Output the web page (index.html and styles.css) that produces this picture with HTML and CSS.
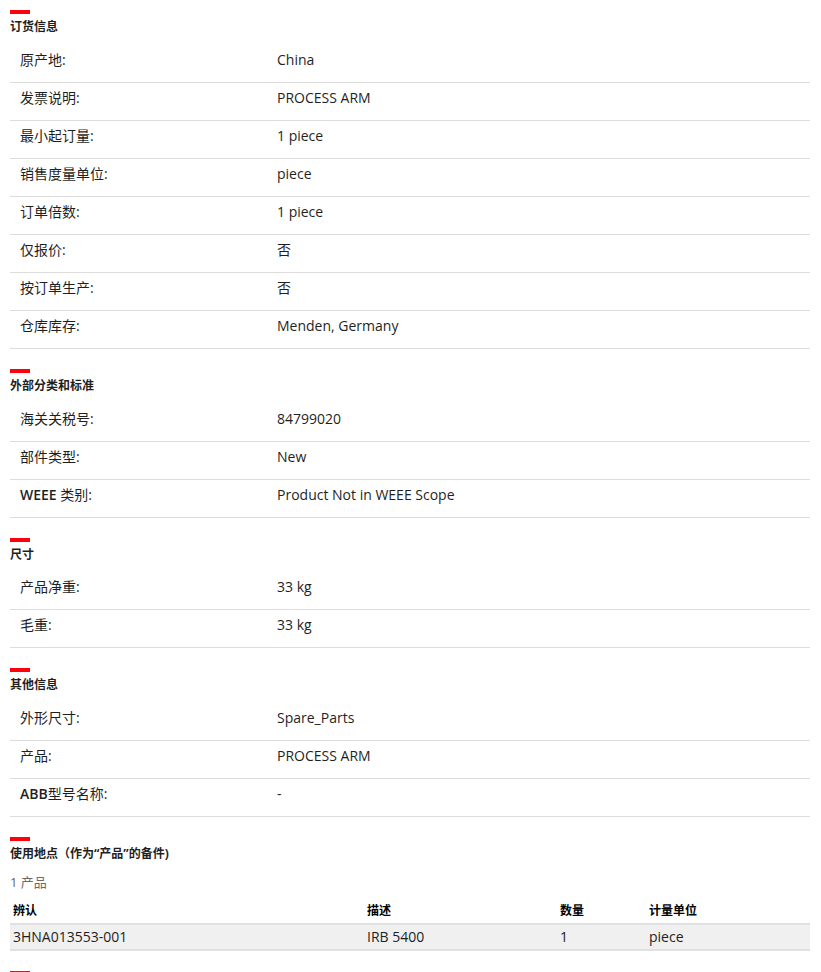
FILE: index.html
```html
<!DOCTYPE html>
<html lang="zh">
<head>
<meta charset="utf-8">
<title>产品详情</title>
<link rel="stylesheet" href="styles.css">
</head>
<body>
<div class="page">
  <section class="sec first">
    <div class="bar"></div>
    <h3 class="title">订货信息</h3>
    <div class="row"><div class="label">原产地:</div><div class="value">China</div></div>
    <div class="row"><div class="label">发票说明:</div><div class="value">PROCESS ARM</div></div>
    <div class="row"><div class="label">最小起订量:</div><div class="value">1 piece</div></div>
    <div class="row"><div class="label">销售度量单位:</div><div class="value">piece</div></div>
    <div class="row"><div class="label">订单倍数:</div><div class="value">1 piece</div></div>
    <div class="row"><div class="label">仅报价:</div><div class="value">否</div></div>
    <div class="row"><div class="label">按订单生产:</div><div class="value">否</div></div>
    <div class="row"><div class="label">仓库库存:</div><div class="value">Menden, Germany</div></div>
  </section>

  <section class="sec">
    <div class="bar"></div>
    <h3 class="title">外部分类和标准</h3>
    <div class="row"><div class="label">海关关税号:</div><div class="value">84799020</div></div>
    <div class="row"><div class="label">部件类型:</div><div class="value">New</div></div>
    <div class="row"><div class="label"><span class="lat">WEEE</span> 类别:</div><div class="value">Product Not in WEEE Scope</div></div>
  </section>

  <section class="sec tight">
    <div class="bar"></div>
    <h3 class="title">尺寸</h3>
    <div class="row"><div class="label">产品净重:</div><div class="value">33 kg</div></div>
    <div class="row"><div class="label">毛重:</div><div class="value">33 kg</div></div>
  </section>

  <section class="sec">
    <div class="bar"></div>
    <h3 class="title">其他信息</h3>
    <div class="row"><div class="label">外形尺寸:</div><div class="value">Spare_Parts</div></div>
    <div class="row"><div class="label">产品:</div><div class="value">PROCESS ARM</div></div>
    <div class="row"><div class="label"><span class="lat">ABB</span>型号名称:</div><div class="value">-</div></div>
  </section>

  <section class="sec">
    <div class="bar"></div>
    <h3 class="title">使用地点（作为“产品”的备件)</h3>
    <p class="count">1 产品</p>
    <table class="parts">
      <thead>
        <tr><th class="c1">辨认</th><th class="c2">描述</th><th class="c3">数量</th><th class="c4">计量单位</th></tr>
      </thead>
      <tbody>
        <tr><td>3HNA013553-001</td><td>IRB 5400</td><td>1</td><td>piece</td></tr>
      </tbody>
    </table>
  </section>

  <section class="sec">
    <div class="bar"></div>
  </section>
</div>
</body>
</html>
```

FILE: styles.css
```css
* { box-sizing: border-box; }

html, body {
  margin: 0;
  padding: 0;
  background: #ffffff;
}

body {
  font-family: "Open Sans", "Noto Sans CJK SC", sans-serif;
  color: #1f1f1f;
  font-size: 14px;
}

.page {
  width: 800px;
  margin-left: 10px;
  padding-top: 10px;
}

.sec {
  display: flex;
  flex-direction: column;
  margin-top: 20px;
}

.sec.first {
  margin-top: 0;
}

.bar {
  width: 20px;
  height: 4px;
  background: #ff000f;
}

.title {
  margin: 5px 0 10px;
  font-size: 12px;
  line-height: 16px;
  font-weight: 700;
  color: #1f1f1f;
}

.sec.tight .title {
  margin-bottom: 9px;
}

.row {
  display: flex;
  padding: 7px 0 14px 10px;
  line-height: 16px;
  border-bottom: 1px solid #dcdcdc;
}

.label {
  width: 257px;
  flex: none;
}

.lat {
  font-weight: 600;
}

.value {
  flex: 1;
}

.count {
  margin: 2px 0 12px;
  font-size: 13px;
  line-height: 16px;
  color: #696969;
}

.parts {
  width: 800px;
  border-collapse: collapse;
  font-size: 14px;
  table-layout: fixed;
}

.parts th {
  text-align: left;
  font-family: "Noto Sans CJK SC", sans-serif;
  font-weight: 700;
  font-size: 12px;
  color: #000;
  padding: 0 3px 5px;
  line-height: 16px;
  border-bottom: 2px solid #e0e0e0;
}

.parts td {
  background: #f0f0f0;
  padding: 4px 3px 4px;
  line-height: 16px;
  border-bottom: 2px solid #e0e0e0;
  color: #1f1f1f;
}

.parts .c1 { width: 354px; }
.parts .c2 { width: 193px; }
.parts .c3 { width: 89px; }
```
